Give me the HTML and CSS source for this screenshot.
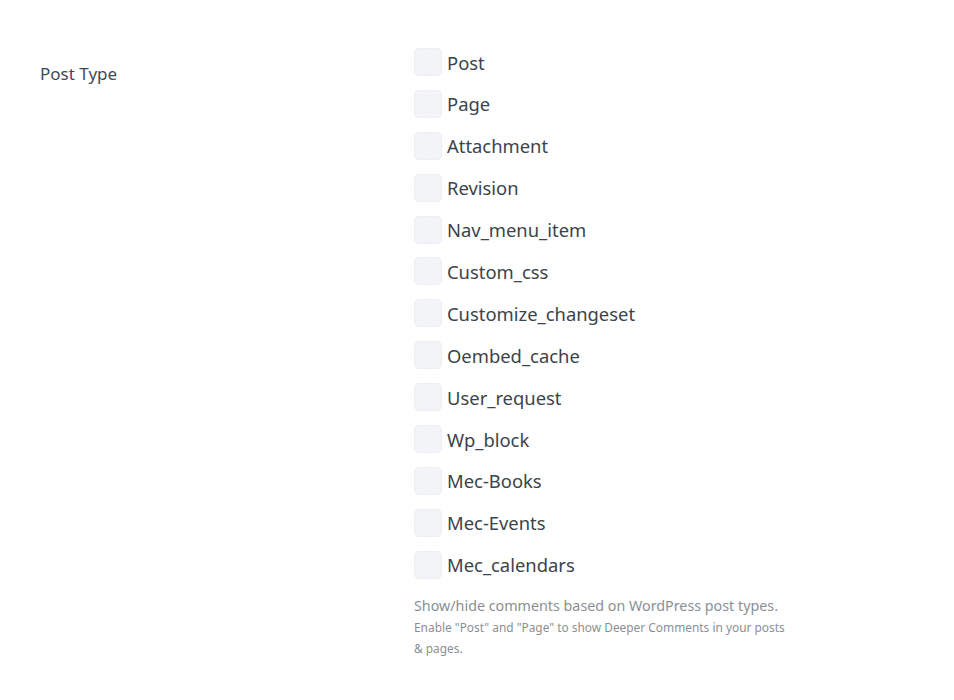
FILE: index.html
```html
<!DOCTYPE html>
<html>
<head>
<meta charset="utf-8">
<link rel="stylesheet" href="styles.css">
</head>
<body>
<div class="row">
  <div class="label">Post Type</div>
  <div class="field">
    <ul class="opts">
      <li><span class="box"></span><span class="txt">Post</span></li>
      <li><span class="box"></span><span class="txt">Page</span></li>
      <li><span class="box"></span><span class="txt">Attachment</span></li>
      <li><span class="box"></span><span class="txt">Revision</span></li>
      <li><span class="box"></span><span class="txt">Nav_menu_item</span></li>
      <li><span class="box"></span><span class="txt">Custom_css</span></li>
      <li><span class="box"></span><span class="txt">Customize_changeset</span></li>
      <li><span class="box"></span><span class="txt">Oembed_cache</span></li>
      <li><span class="box"></span><span class="txt">User_request</span></li>
      <li><span class="box"></span><span class="txt">Wp_block</span></li>
      <li><span class="box"></span><span class="txt">Mec-Books</span></li>
      <li><span class="box"></span><span class="txt">Mec-Events</span></li>
      <li><span class="box"></span><span class="txt">Mec_calendars</span></li>
    </ul>
    <p class="desc">Show/hide comments based on WordPress post types.</p>
    <p class="note">Enable "Post" and "Page" to show Deeper Comments in your posts &amp; pages.</p>
  </div>
</div>
</body>
</html>
```
FILE: styles.css
```css
html, body { margin: 0; padding: 0; background: #fff; }
body { font-family: "Noto Sans", "Open Sans", sans-serif; color: #3c434a; }
.row { display: flex; padding: 48px 0 0 40px; }
.label { width: 374px; font-size: 17px; line-height: 52px; color: #3f4a55; }
.field { width: 380px; }
.opts { list-style: none; margin: 0; padding: 0; display: flex; flex-direction: column; gap: 13.9px; }
.opts li { display: flex; align-items: center; height: 28px; }
.box { width: 28px; height: 28px; box-sizing: border-box; border-radius: 5px; background: #f3f4f7; border: 1px solid #eceef2; margin-right: 5px; flex: none; }
.txt { font-size: 18.4px; color: #3b434b; }
.desc { margin: 17px 0 0; font-size: 14.3px; line-height: 20px; color: #8a8f96; }
.note { margin: 1px 0 0; font-size: 11.9px; line-height: 21px; color: #8a8f96; }
```
